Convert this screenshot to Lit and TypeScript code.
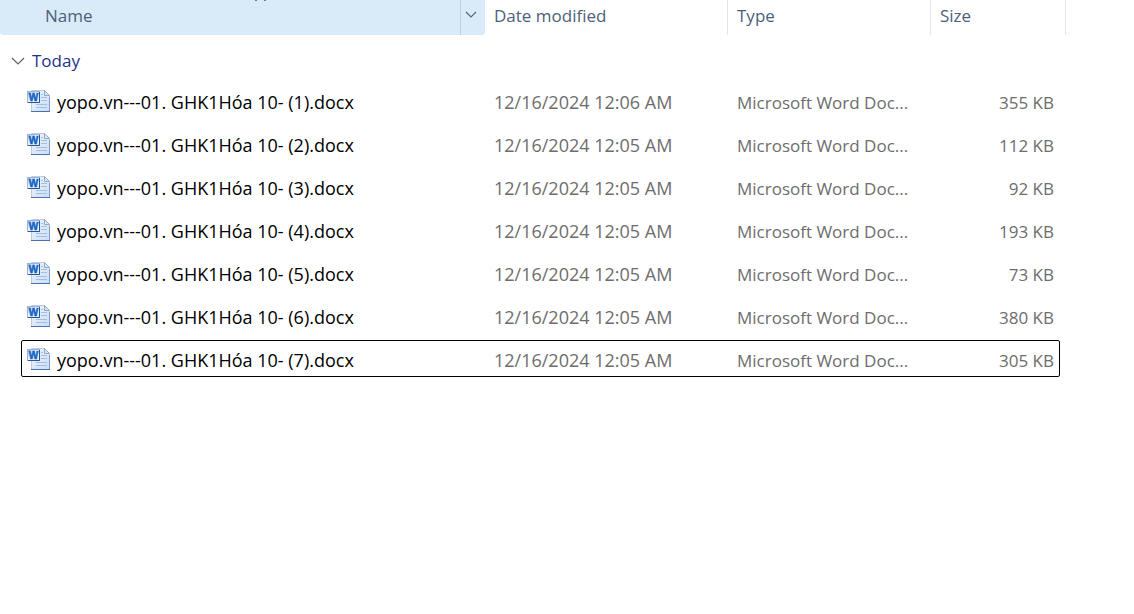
import { LitElement, html, css, svg } from "lit";
import { customElement, property, state } from "lit/decorators.js";

interface FileEntry {
  name: string;
  modified: string;
  type: string;
  size: string;
}

const DOC_TYPE = "Microsoft Word Doc...";

const FILES: FileEntry[] = [
  { name: "yopo.vn---01. GHK1Hóa 10- (1).docx", modified: "12/16/2024 12:06 AM", type: DOC_TYPE, size: "355 KB" },
  { name: "yopo.vn---01. GHK1Hóa 10- (2).docx", modified: "12/16/2024 12:05 AM", type: DOC_TYPE, size: "112 KB" },
  { name: "yopo.vn---01. GHK1Hóa 10- (3).docx", modified: "12/16/2024 12:05 AM", type: DOC_TYPE, size: "92 KB" },
  { name: "yopo.vn---01. GHK1Hóa 10- (4).docx", modified: "12/16/2024 12:05 AM", type: DOC_TYPE, size: "193 KB" },
  { name: "yopo.vn---01. GHK1Hóa 10- (5).docx", modified: "12/16/2024 12:05 AM", type: DOC_TYPE, size: "73 KB" },
  { name: "yopo.vn---01. GHK1Hóa 10- (6).docx", modified: "12/16/2024 12:05 AM", type: DOC_TYPE, size: "380 KB" },
  { name: "yopo.vn---01. GHK1Hóa 10- (7).docx", modified: "12/16/2024 12:05 AM", type: DOC_TYPE, size: "305 KB" },
];

@customElement("word-icon")
export class WordIcon extends LitElement {
  static styles = css`
    :host {
      display: block;
      flex: none;
      width: 24px;
      height: 24px;
    }
    .art {
      display: block;
    }
    .letter {
      font: bold 10px "Liberation Sans", sans-serif;
      fill: #0f62c4;
      stroke: #0f62c4;
      stroke-width: 0.5px;
    }
  `;

  render() {
    return html`<svg class="art" width="24" height="24" viewBox="0 0 24 24" aria-hidden="true">
      <defs>
        <linearGradient id="page" x1="0" y1="0" x2="1" y2="1">
          <stop offset="0" stop-color="#f2f7fd" />
          <stop offset="1" stop-color="#c9dcf5" />
        </linearGradient>
        <linearGradient id="tile" x1="0" y1="0" x2="1" y2="1">
          <stop offset="0" stop-color="#a9c3e6" />
          <stop offset="0.5" stop-color="#f4f9ff" />
          <stop offset="1" stop-color="#dceafa" />
        </linearGradient>
      </defs>
      <path d="M4.5 1.5H17.5L22.5 6.5V22.5H4.5Z" fill="url(#page)" stroke="#bccbe0" />
      <path d="M22.5 8V22.5" fill="none" stroke="#7f9cc8" />
      <path d="M4 22.5H23" fill="none" stroke="#4a71ab" />
      <path d="M17.5 1.5V6.5H22.5Z" fill="#dbe7f6" stroke="#93a9c6" />
      <path d="M14 5.5H16M14 8.5H20M14 11.5H20M9 15.5H20M9 18.5H20" stroke="#a3bee3" />
      <rect x="0.5" y="2.5" width="12" height="11" fill="url(#tile)" stroke="#9bb3d6" />
      <path d="M12.5 3V13.5H1" fill="none" stroke="#2f5290" />
      ${svg`<text class="letter" x="6.5" y="12" text-anchor="middle">W</text>`}
    </svg>`;
  }
}

@customElement("file-table")
export class FileTable extends LitElement {
  @property({ attribute: false }) files: FileEntry[] = [];
  @state() private open = true;
  @state() private focused = 6;

  static styles = css`
    :host {
      display: block;
      padding-right: 68px;
    }
    .table {
      width: 100%;
      table-layout: fixed;
      border-collapse: separate;
      border-spacing: 0;
    }
    .w-date {
      width: 243px;
    }
    .w-type {
      width: 203px;
    }
    .w-size {
      width: 135px;
    }
    th,
    td {
      padding: 0;
      text-align: left;
      font-weight: 400;
      white-space: nowrap;
    }
    button {
      margin: 0;
      padding: 0;
      border: 0;
      background: none;
      font: inherit;
      color: inherit;
      text-align: left;
    }
    .head {
      position: relative;
      height: 35px;
      color: #4c607a;
    }
    .cell {
      display: flex;
      height: 35px;
      box-sizing: border-box;
      border-right: 1px solid #e5e5e5;
    }
    .label {
      flex: 1;
      padding: 0 0 4px 9px;
    }
    .sorted {
      border-right: 0;
      border-radius: 0 0 3px 3px;
      background: #d9ebf9;
    }
    .sorted .label {
      padding-left: 45px;
    }
    .menu {
      display: flex;
      align-items: flex-start;
      width: 25px;
      padding-top: 11px;
      padding-left: 4px;
      box-sizing: border-box;
      border-left: 1px solid #bcd0df;
    }
    .mark {
      position: absolute;
      top: 0;
      left: 255px;
    }
    .group {
      height: 44px;
      color: #1e3287;
    }
    .toggle {
      display: flex;
      align-items: center;
      gap: 7px;
      padding: 8px 0 0 11px;
    }
    .row {
      position: relative;
      height: 43px;
      color: #6d6d6d;
    }
    .row td {
      padding-left: 9px;
      padding-top: 4px;
    }
    .row .name {
      padding-left: 27px;
      padding-top: 3px;
      font-size: 18px;
    }
    .row .date {
      padding-top: 3px;
      font-size: 18px;
    }
    .file {
      display: flex;
      align-items: center;
      gap: 6px;
      color: #000;
    }
    .file word-icon {
      margin-bottom: 3px;
    }
    .row .size {
      padding-right: 12px;
      text-align: right;
    }
    .focused .size::after {
      content: "";
      position: absolute;
      inset: 3px 6px 3px 21px;
      border: 1px solid #000;
      border-radius: 2px;
      pointer-events: none;
    }
  `;

  render() {
    return html`<table class="table">
      <colgroup>
        <col />
        <col class="w-date" />
        <col class="w-type" />
        <col class="w-size" />
      </colgroup>
      <thead>
        <tr>
          <th class="head" scope="col" aria-sort="ascending">
            <div class="cell sorted">
              <button class="label">Name</button>
              <button class="menu" aria-label="Filter by name">
                <svg width="12" height="7" viewBox="0 0 12 7" aria-hidden="true">
                  <path d="M1 1L6 6L11 1" fill="none" stroke="#566879" stroke-width="1.2" />
                </svg>
              </button>
            </div>
            <svg class="mark" width="11" height="1" viewBox="0 0 11 1" aria-hidden="true">
              <path d="M0 0H2V1H0ZM9 0H11V1H9Z" fill="#6b7f92" />
            </svg>
          </th>
          ${["Date modified", "Type", "Size"].map(
            (title) => html`<th class="head" scope="col">
              <div class="cell"><button class="label">${title}</button></div>
            </th>`
          )}
        </tr>
      </thead>
      <tbody>
        <tr>
          <th class="group" colspan="4" scope="rowgroup">
            <button class="toggle" aria-expanded=${this.open} @click=${() => (this.open = !this.open)}>
              <svg width="14" height="8" viewBox="0 0 14 8" aria-hidden="true">
                <path d="M1 1L7 7L13 1" fill="none" stroke="#606060" stroke-width="1.2" />
              </svg>
              Today
            </button>
          </th>
        </tr>
        ${this.open
          ? this.files.map(
              (file, i) => html`<tr class="row ${i === this.focused ? "focused" : ""}" @click=${() => (this.focused = i)}>
                <td class="name">
                  <div class="file"><word-icon></word-icon>${file.name}</div>
                </td>
                <td class="date">${file.modified}</td>
                <td>${file.type}</td>
                <td class="size">${file.size}</td>
              </tr>`
            )
          : null}
      </tbody>
    </table>`;
  }
}

@customElement("app-root")
export class AppRoot extends LitElement {
  static styles = css`
    :host {
      display: block;
      min-height: 100vh;
      background: #fff;
      font: 17px/24px "Open Sans", "Noto Sans", sans-serif;
    }
  `;

  render() {
    return html`<file-table .files=${FILES}></file-table>`;
  }
}
